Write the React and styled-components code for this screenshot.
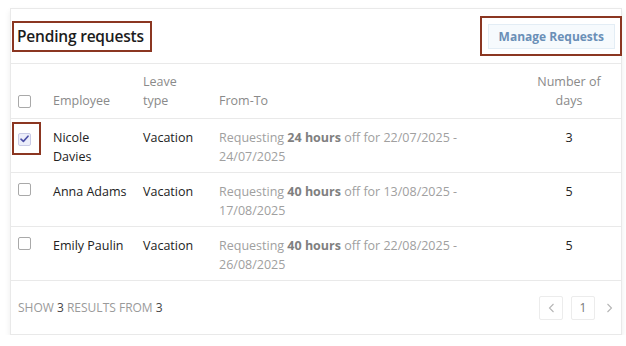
import styled, { createGlobalStyle } from "styled-components";

const GlobalStyle = createGlobalStyle`
  body {
    margin: 0;
    background: #fff;
    font-family: "Open Sans", "Noto Sans", sans-serif;
  }
`;

const requests = [
  { name: "Nicole Davies", type: "Vacation", hours: 24, from: "22/07/2025", to: "24/07/2025", days: 3, checked: true },
  { name: "Anna Adams", type: "Vacation", hours: 40, from: "13/08/2025", to: "17/08/2025", days: 5 },
  { name: "Emily Paulin", type: "Vacation", hours: 40, from: "22/08/2025", to: "26/08/2025", days: 5 },
];

const CheckIcon = () => (
  <svg width="9" height="8" viewBox="0 0 9 8">
    <path d="M1 4.2 L3.4 6.4 L8 1.2" fill="none" stroke="#4b4fa6" strokeWidth="1.6" strokeLinecap="round" strokeLinejoin="round" />
  </svg>
);

const Chevron = ({ dir }) => (
  <svg width="7" height="10" viewBox="0 0 7 10">
    <path d={dir === "left" ? "M5.5 1 L1.5 5 L5.5 9" : "M1.5 1 L5.5 5 L1.5 9"} fill="none" stroke="#b5b5b5" strokeWidth="1.1" />
  </svg>
);

const App = () => {
  return (
    <>
      <GlobalStyle />
      <Card>
        <Header>
          <Title>Pending requests</Title>
          <ButtonMark>
            <ManageButton>Manage Requests</ManageButton>
          </ButtonMark>
        </Header>
        <Table>
          <colgroup>
            <col style={{ width: 32 }} />
            <col style={{ width: 90 }} />
            <col style={{ width: 76 }} />
            <col style={{ width: 308 }} />
            <col />
          </colgroup>
          <thead>
            <tr>
              <HeadCell $check><Checkbox /></HeadCell>
              <HeadCell>Employee</HeadCell>
              <HeadCell>Leave type</HeadCell>
              <HeadCell>From-To</HeadCell>
              <HeadCell $center>Number of days</HeadCell>
            </tr>
          </thead>
          <tbody>
            {requests.map((r) => (
              <tr key={r.name}>
                <Cell $check>
                  {r.checked ? (
                    <CheckMark>
                      <Checkbox $checked><CheckIcon /></Checkbox>
                    </CheckMark>
                  ) : (
                    <Checkbox />
                  )}
                </Cell>
                <Cell $name>{r.name}</Cell>
                <Cell>{r.type}</Cell>
                <Cell $muted>
                  Requesting <b>{r.hours} hours</b> off for {r.from} - {r.to}
                </Cell>
                <Cell $center>{r.days}</Cell>
              </tr>
            ))}
          </tbody>
        </Table>
        <Footer>
          <Summary>
            SHOW <em>3</em> RESULTS FROM <em>3</em>
          </Summary>
          <Pager>
            <PageBox><Chevron dir="left" /></PageBox>
            <PageBox>1</PageBox>
            <PageArrow><Chevron dir="right" /></PageArrow>
          </Pager>
        </Footer>
      </Card>
    </>
  );
};

export default App;

const Card = styled.div`
  margin: 8px 0 0 10px;
  width: 612px;
  box-sizing: border-box;
  border: 1px solid #e9e9e9;
  background: #fff;
  box-shadow: 0 3px 6px rgba(0, 0, 0, 0.08);
`;

const Header = styled.div`
  display: flex;
  justify-content: space-between;
  align-items: center;
  height: 54px;
  padding-left: 1px;
  border-bottom: 1px solid #e9e9e9;
`;

const Title = styled.h2`
  margin: 0;
  padding: 2px 6px 2px 3px;
  border: 2px solid #8b3621;
  font-size: 15.5px;
  letter-spacing: -0.2px;
  line-height: 23px;
  font-weight: 600;
  color: #1c1c1c;
`;

const ButtonMark = styled.div`
  margin-right: -1px;
  padding: 6px 5px 5px 6px;
  border: 2px solid #8b3621;
`;

const ManageButton = styled.button`
  display: block;
  height: 25px;
  padding: 0 10px;
  border: 1px solid #e3edf5;
  background: #f6fafd;
  color: #6a8fb7;
  font-family: inherit;
  font-size: 12px;
  font-weight: 700;
  cursor: pointer;
`;

const Table = styled.table`
  width: 100%;
  table-layout: fixed;
  border-collapse: collapse;
  font-size: 12.5px;
  line-height: 19px;
`;

const HeadCell = styled.th`
  padding: 8px ${(p) => (p.$center ? "12px" : "10px")} 8px ${(p) => (p.$check ? "7px" : p.$center ? "12px" : "10px")};
  vertical-align: bottom;
  text-align: ${(p) => (p.$center ? "center" : "left")};
  font-weight: 400;
  color: #8a8a8a;
  border-bottom: 1px solid #e9e9e9;
  ${(p) => p.$check && "padding-bottom: 10px;"}
`;

const Cell = styled.td`
  padding: 9px ${(p) => (p.$center ? "12px" : p.$name ? "4px" : "10px")} 6px ${(p) => (p.$check ? "7px" : p.$center ? "12px" : "10px")};
  vertical-align: top;
  text-align: ${(p) => (p.$center ? "center" : "left")};
  color: ${(p) => (p.$muted ? "#a0a0a0" : "#222")};
  border-bottom: 1px solid #e9e9e9;
  ${(p) => p.$check && "padding-top: 10px;"}

  b {
    font-weight: 700;
    color: #808080;
  }
`;

const Checkbox = styled.span`
  display: flex;
  align-items: center;
  justify-content: center;
  width: 13px;
  height: 13px;
  box-sizing: border-box;
  border: 1px solid ${(p) => (p.$checked ? "#c9cbe6" : "#a9a9a9")};
  border-radius: 2px;
  background: ${(p) => (p.$checked ? "#eceefa" : "#fff")};
`;

const CheckMark = styled.span`
  display: inline-block;
  margin: -11px 0 0 -6px;
  padding: 9px 8px 7px 4px;
  border: 2px solid #8b3621;
`;

const Footer = styled.div`
  display: flex;
  justify-content: space-between;
  align-items: center;
  height: 53px;
  padding: 0 6px 0 7px;
`;

const Summary = styled.div`
  font-size: 12px;
  color: #9a9a9a;

  em {
    font-style: normal;
    color: #444;
  }
`;

const Pager = styled.div`
  display: flex;
  align-items: center;
  gap: 8px;
`;

const PageBox = styled.span`
  display: flex;
  align-items: center;
  justify-content: center;
  width: 24px;
  height: 24px;
  box-sizing: border-box;
  border: 1px solid #ececec;
  border-radius: 2px;
  font-size: 12px;
  color: #777;
`;

const PageArrow = styled.span`
  display: flex;
  align-items: center;
  justify-content: center;
  width: 12px;
  height: 24px;
`;
